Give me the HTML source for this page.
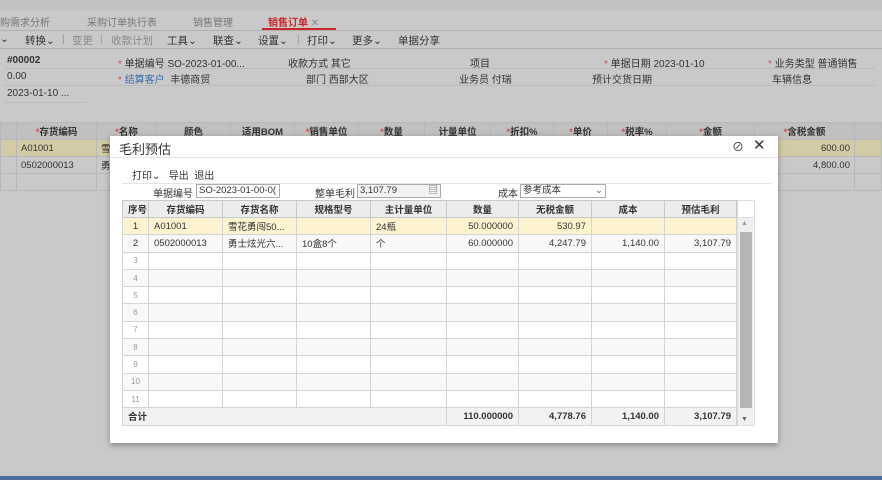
<!DOCTYPE html>
<html><head><meta charset="utf-8"><style>
*{margin:0;padding:0;box-sizing:border-box}
body{width:882px;height:480px;overflow:hidden;background:#c9c9c9;font-family:"Liberation Sans","Noto Sans CJK SC",sans-serif;font-size:10px;color:#333;position:relative}
.a{position:absolute;white-space:nowrap}
.ln{position:absolute;height:1px;background:#b0b0b0}
.r{color:#d05050}
.tb{position:absolute;top:33px;font-size:10.5px;white-space:nowrap}
table{border-collapse:collapse;table-layout:fixed}
#bg td{border:1px solid #b8b8b8;height:17px;padding:0 4px;font-size:9.5px}
#g td{border:1px solid #d4d4d4;height:17.3px;padding:0 5px;font-size:9.5px;overflow:hidden}
#g tr.h td{background:#ececec;font-weight:bold;text-align:center;border-color:#c8c8c8;height:17px}
#g td.n{text-align:right}
#g td.s{text-align:center;color:#999;font-size:8px}
.inp{position:absolute;border:1px solid #aaa;background:#fff;height:14px;font-size:9.5px;padding:0 2px;line-height:12px}
</style></head><body>
<div class="a" style="left:0;top:0;width:882px;height:10px;background:#c2c2c2"></div>
<div class="a" style="left:0;top:14px;font-size:10px;color:#777">购需求分析</div>
<div class="a" style="left:87px;top:14px;color:#777">采购订单执行表</div>
<div class="a" style="left:193px;top:14px;color:#777">销售管理</div>
<div class="a" style="left:268px;top:14px;color:#c8282c;font-weight:bold">销售订单 <span style="color:#888;font-weight:normal">✕</span></div>
<div class="a" style="left:262px;top:28px;width:74px;height:2px;background:#c8282c"></div>
<div class="ln" style="left:0;top:30px;width:882px"></div>
<div class="tb" style="left:0">⌄</div>
<div class="tb" style="left:25px">转换⌄</div>
<div class="tb" style="left:62px;color:#999">|</div>
<div class="tb" style="left:72px;color:#888">变更</div>
<div class="tb" style="left:100px;color:#999">|</div>
<div class="tb" style="left:111px;color:#888">收款计划</div>
<div class="tb" style="left:167px">工具⌄</div>
<div class="tb" style="left:213px">联查⌄</div>
<div class="tb" style="left:258px">设置⌄</div>
<div class="tb" style="left:297px;color:#999">|</div>
<div class="tb" style="left:307px">打印⌄</div>
<div class="tb" style="left:352px">更多⌄</div>
<div class="tb" style="left:398px">单据分享</div>
<div class="ln" style="left:0;top:48px;width:882px"></div>
<div class="a" style="left:7px;top:55px;font-weight:bold">#00002</div>
<div class="a" style="left:7px;top:71px">0.00</div>
<div class="a" style="left:7px;top:88px">2023-01-10 ...</div>
<div class="a" style="left:118px;top:55px"><span class="r">*</span> 单据编号 SO-2023-01-00...</div>
<div class="a" style="left:118px;top:71px"><span class="r">*</span> <span style="color:#3a6fb0">结算客户</span> &nbsp;丰德商贸</div>
<div class="a" style="left:288px;top:55px">收款方式 其它</div>
<div class="a" style="left:306px;top:71px">部门 西部大区</div>
<div class="a" style="left:470px;top:55px">项目</div>
<div class="a" style="left:459px;top:71px">业务员 付瑞</div>
<div class="a" style="left:604px;top:55px"><span class="r">*</span> 单据日期 2023-01-10</div>
<div class="a" style="left:592px;top:71px">预计交货日期</div>
<div class="a" style="left:768px;top:55px"><span class="r">*</span> 业务类型 普通销售</div>
<div class="a" style="left:772px;top:71px">车辆信息</div>
<div class="ln" style="left:5px;top:68px;width:870px;background:#bbb"></div>
<div class="ln" style="left:5px;top:85px;width:870px;background:#bbb"></div>
<div class="ln" style="left:5px;top:102px;width:82px;background:#bbb"></div>
<table id="bg" class="a" style="left:0;top:122px;width:882px">
<tr style="background:#c0c0c0;font-weight:bold;text-align:center"><td style="width:16px"></td><td style="width:80px"><span class="r">*</span>存货编码</td><td style="width:60px"><span class="r">*</span>名称</td><td style="width:74px">颜色</td><td style="width:64px">适用BOM</td><td style="width:64px"><span class="r">*</span>销售单位</td><td style="width:66px"><span class="r">*</span>数量</td><td style="width:66px">计量单位</td><td style="width:63px"><span class="r">*</span>折扣%</td><td style="width:54px"><span class="r">*</span>单价</td><td style="width:59px"><span class="r">*</span>税率%</td><td style="width:88px"><span class="r">*</span>金额</td><td style="width:100px"><span class="r">*</span>含税金额</td><td></td></tr>
<tr style="background:#d3cba5"><td></td><td>A01001</td><td>雪</td><td></td><td></td><td></td><td></td><td></td><td></td><td></td><td></td><td></td><td style="text-align:right">600.00</td><td></td></tr>
<tr><td></td><td>0502000013</td><td>勇</td><td></td><td></td><td></td><td></td><td></td><td></td><td></td><td></td><td></td><td style="text-align:right">4,800.00</td><td></td></tr>
<tr><td></td><td></td><td></td><td></td><td></td><td></td><td></td><td></td><td></td><td></td><td></td><td></td><td></td><td></td></tr>
</table>
<div class="a" style="left:0;top:476px;width:882px;height:4px;background:#4a6d9a"></div>

<div class="a" style="left:110px;top:136px;width:668px;height:307px;background:#fff;box-shadow:0 2px 6px rgba(0,0,0,.35)">
<div class="a" style="left:9px;top:3px;font-size:13px;color:#333">毛利预估</div>
<div class="a" style="left:622px;top:2px;font-size:12px">⊘</div>
<div class="a" style="left:643px;top:0px;font-size:15px">✕</div>
<div class="ln" style="left:0;top:21px;width:668px;background:#e4e4e4"></div>
<div class="a" style="left:22px;top:31px">打印⌄ &nbsp; 导出 &nbsp;退出</div>
<div class="ln" style="left:12px;top:47px;width:650px;background:#e4e4e4"></div>
<div class="a" style="left:43px;top:49px">单据编号</div>
<div class="inp" style="left:86px;top:48px;width:84px">SO-2023-01-00-0(</div>
<div class="a" style="left:205px;top:49px">整单毛利</div>
<div class="inp" style="left:247px;top:48px;width:84px;background:#f2f2f2">3,107.79<span style="float:right;color:#666">▤</span></div>
<div class="a" style="left:388px;top:49px">成本</div>
<div class="inp" style="left:410px;top:48px;width:86px">参考成本<span style="float:right;color:#666">⌄</span></div>
<table id="g" class="a" style="left:12px;top:64px;width:615px">
<tr class="h"><td style="width:26px">序号</td><td style="width:74px">存货编码</td><td style="width:74px">存货名称</td><td style="width:74px">规格型号</td><td style="width:76px">主计量单位</td><td style="width:72px">数量</td><td style="width:73px">无税金额</td><td style="width:73px">成本</td><td>预估毛利</td></tr>
<tr style="background:#fdf4cf"><td class="s" style="color:#333;font-size:9.5px">1</td><td>A01001</td><td>雪花勇闯50...</td><td></td><td>24瓶</td><td class="n">50.000000</td><td class="n">530.97</td><td></td><td></td></tr>
<tr style="background:#f8f8f8"><td class="s" style="color:#333;font-size:9.5px">2</td><td>0502000013</td><td>勇士炫光六...</td><td>10盒8个</td><td>个</td><td class="n">60.000000</td><td class="n">4,247.79</td><td class="n">1,140.00</td><td class="n">3,107.79</td></tr>
<tr><td class="s">3</td><td></td><td></td><td></td><td></td><td></td><td></td><td></td><td></td></tr>
<tr style="background:#f8f8f8"><td class="s">4</td><td></td><td></td><td></td><td></td><td></td><td></td><td></td><td></td></tr>
<tr><td class="s">5</td><td></td><td></td><td></td><td></td><td></td><td></td><td></td><td></td></tr>
<tr style="background:#f8f8f8"><td class="s">6</td><td></td><td></td><td></td><td></td><td></td><td></td><td></td><td></td></tr>
<tr><td class="s">7</td><td></td><td></td><td></td><td></td><td></td><td></td><td></td><td></td></tr>
<tr style="background:#f8f8f8"><td class="s">8</td><td></td><td></td><td></td><td></td><td></td><td></td><td></td><td></td></tr>
<tr><td class="s">9</td><td></td><td></td><td></td><td></td><td></td><td></td><td></td><td></td></tr>
<tr style="background:#f8f8f8"><td class="s">10</td><td></td><td></td><td></td><td></td><td></td><td></td><td></td><td></td></tr>
<tr><td class="s">11</td><td></td><td></td><td></td><td></td><td></td><td></td><td></td><td></td></tr>
<tr style="background:#f2f2f2;font-weight:bold"><td colspan="5" style="font-weight:bold">合计</td><td class="n">110.000000</td><td class="n">4,778.76</td><td class="n">1,140.00</td><td class="n">3,107.79</td></tr>
</table>
<div class="a" style="left:627px;top:64px;width:18px;height:226px;background:#fff;border:1px solid #ddd"></div>
<div class="a" style="left:627px;top:81px;width:18px;height:209px;background:#f0f0f0;border:1px solid #ddd"></div>
<div class="a" style="left:631px;top:84px;font-size:7px;color:#999">▲</div>
<div class="a" style="left:630px;top:96px;width:12px;height:176px;background:#b5b5b5"></div>
<div class="a" style="left:631px;top:280px;font-size:7px;color:#666">▼</div>
</div>
</body></html>
